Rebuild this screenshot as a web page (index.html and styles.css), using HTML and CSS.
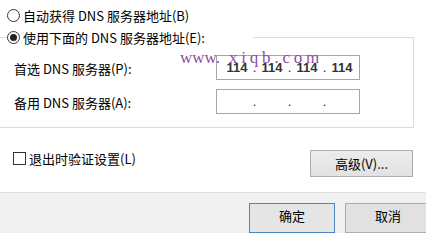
FILE: index.html
```html
<!DOCTYPE html>
<html lang="zh-CN">
<head>
<meta charset="utf-8">
<title>DNS</title>
<link rel="stylesheet" href="styles.css">
</head>
<body>
<div class="dialog">
  <div class="main">
    <label class="radio-row first"><span class="radio"></span><span class="txt">自动获得 DNS 服务器地址(B)</span></label>
    <fieldset class="group">
      <legend class="legend"><span class="radio-row"><span class="radio checked"></span><span class="txt">使用下面的 DNS 服务器地址(E):</span></span></legend>
      <div class="field-row">
        <span class="field-label">首选 DNS 服务器(P):</span>
        <div class="ip"><span class="seg">114</span><span class="dot">.</span><span class="seg">114</span><span class="dot">.</span><span class="seg">114</span><span class="dot">.</span><span class="seg">114</span></div>
      </div>
      <div class="field-row second">
        <span class="field-label">备用 DNS 服务器(A):</span>
        <div class="ip"><span class="seg"></span><span class="dot">.</span><span class="seg"></span><span class="dot">.</span><span class="seg"></span><span class="dot">.</span><span class="seg"></span></div>
      </div>
    </fieldset>
    <div class="options-row">
      <label class="check-row"><span class="checkbox"></span><span class="txt">退出时验证设置(L)</span></label>
      <button class="btn btn-adv">高级(V)...</button>
    </div>
  </div>
  <div class="footer">
    <button class="btn btn-ok">确定</button>
    <button class="btn btn-cancel">取消</button>
  </div>
  <div class="watermark">www.<span class="wm-rest">xiqb.com</span></div>
</div>
</body>
</html>
```
FILE: styles.css
```css
html, body {
  margin: 0;
  padding: 0;
}
body {
  width: 426px;
  height: 233px;
  overflow: hidden;
  background: #f0f0f0;
  font-family: "Noto Sans CJK SC", "Noto Sans", sans-serif;
  font-size: 13px;
  line-height: 17px;
  color: #000;
}
.dialog {
  position: relative;
  height: 233px;
  display: flex;
  flex-direction: column;
}
.main {
  background: #fff;
  height: 194px;
  border-bottom: 1px solid #dfdfdf;
  display: flex;
  flex-direction: column;
}
.radio-row {
  display: flex;
  align-items: center;
  height: 17px;
  gap: 3px;
}
.radio-row.first {
  margin-top: 7px;
  padding-left: 7px;
}
.radio {
  width: 13px;
  height: 13px;
  box-sizing: border-box;
  border: 1px solid #333;
  border-radius: 50%;
  background: #fff;
  flex: none;
  position: relative;
}
.radio.checked::after {
  content: "";
  position: absolute;
  left: 2px;
  top: 2px;
  width: 7px;
  height: 7px;
  border-radius: 50%;
  background: #222;
}
.group {
  margin: 5px 12px 0 -10px;
  padding: 9px 0 13px 0;
  border: 1px solid #dcdcdc;
  min-width: 0;
}
.legend {
  margin-left: 16px;
  padding: 0;
  width: 246px;
  height: 17px;
}
.field-row {
  display: flex;
  align-items: center;
  padding-left: 23px;
}
.field-row.second {
  margin-top: 9px;
}
.field-label {
  width: 202px;
  flex: none;
  padding-top: 2px;
}
.ip {
  width: 144px;
  height: 25px;
  box-sizing: border-box;
  border: 1px solid #a6a6a6;
  background: #fff;
  display: flex;
  align-items: center;
  padding-left: 6px;
  font-family: "Liberation Sans", Arial, sans-serif;
  font-size: 13px;
  font-weight: bold;
  color: #333;
}
.seg {
  width: 28px;
  text-align: center;
  flex: none;
}
.dot {
  width: 7px;
  text-align: center;
  flex: none;
  font-weight: normal;
  color: #222;
}
.options-row {
  display: flex;
  justify-content: space-between;
  align-items: flex-start;
  margin-top: 22px;
  padding: 0 13px;
}
.check-row {
  display: flex;
  align-items: center;
  height: 17px;
  gap: 3px;
}
.checkbox {
  width: 13px;
  height: 13px;
  box-sizing: border-box;
  border: 1px solid #333;
  background: #fff;
  flex: none;
}
.btn {
  font-family: "Noto Sans CJK SC", "Noto Sans", sans-serif;
  font-size: 13px;
  line-height: 17px;
  color: #000;
  box-sizing: border-box;
  border: 1px solid #adadad;
  background: #e1e1e1;
  padding: 0;
  margin: 0;
}
.btn-adv {
  width: 103px;
  height: 27px;
  background: linear-gradient(#ececec, #e2e2e2);
}
.footer {
  display: flex;
  justify-content: flex-end;
  gap: 10px;
  padding-top: 10px;
  margin-right: -5px;
}
.footer .btn {
  width: 86px;
  height: 30px;
  padding-bottom: 5px;
}
.btn-ok {
  border-color: #4a86c0;
  background: #e5e5e5;
}
.watermark {
  position: absolute;
  left: 180px;
  top: 48px;
  font-family: "Liberation Serif", "Times New Roman", serif;
  font-size: 17px;
  line-height: 20px;
  color: #8b4f9e;
  white-space: nowrap;
}
.wm-rest {
  margin-left: 9px;
  letter-spacing: 3.8px;
}
```
